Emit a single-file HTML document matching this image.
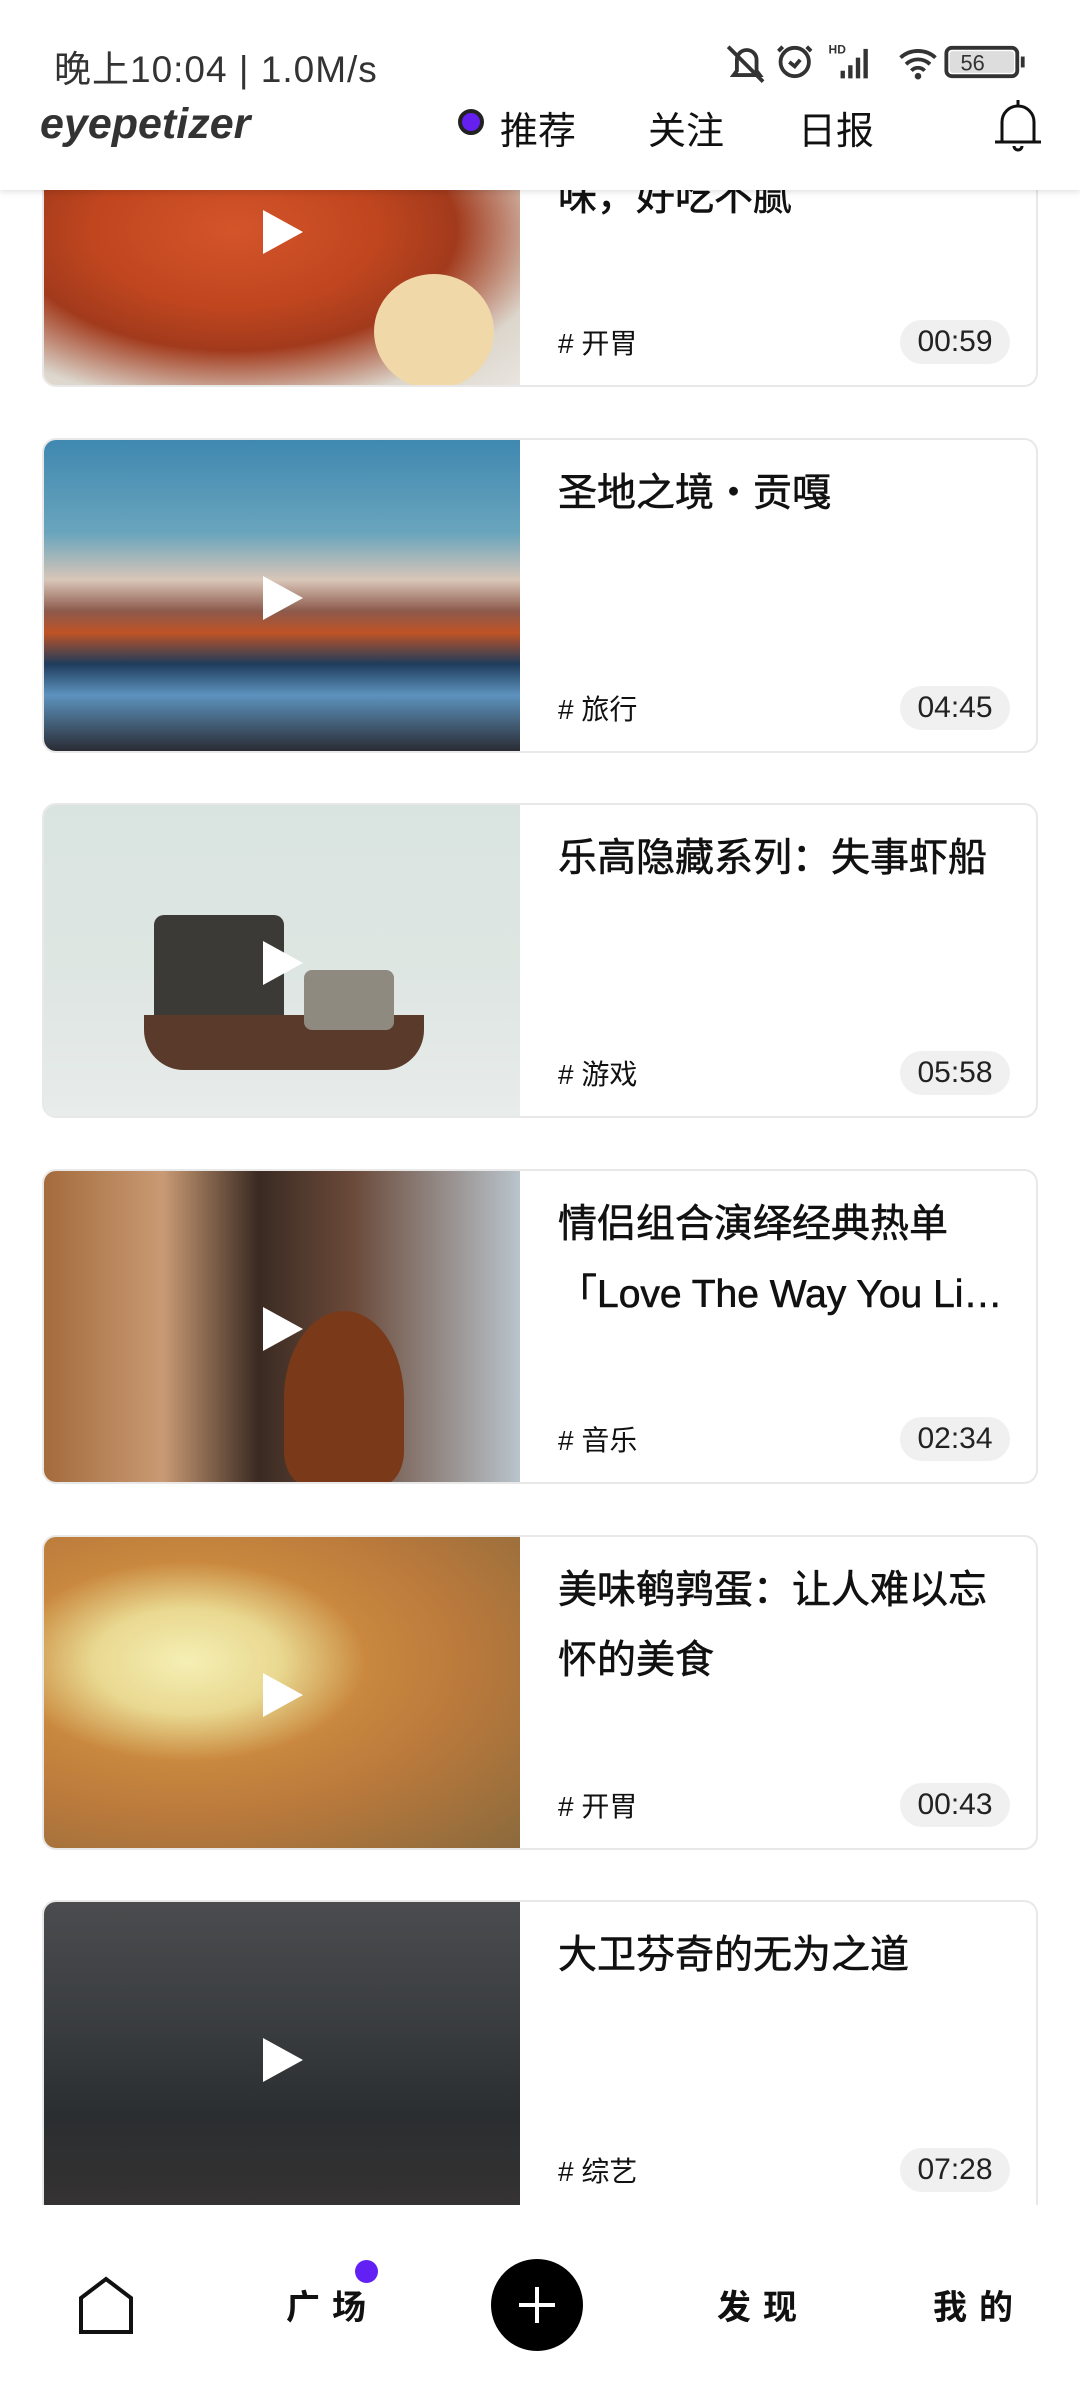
<!DOCTYPE html>
<html><head><meta charset="utf-8"><style>
*{margin:0;padding:0;box-sizing:border-box}
body{width:1080px;height:2400px;background:#fff;position:relative;overflow:hidden;font-family:"Liberation Sans","Noto Sans CJK SC",sans-serif;color:#111}
.card{position:absolute;left:42px;width:996px;height:315px;border:2px solid #e8e8e8;border-radius:14px;overflow:hidden;background:#fff}
.img{position:absolute;left:0;top:0;width:476px;height:100%}
.play{position:absolute;left:219px;top:136px;width:0;height:0;border-left:40px solid #fff;border-top:22px solid transparent;border-bottom:22px solid transparent}
.title{position:absolute;left:514px;top:19px;width:450px;font-size:39px;line-height:70px;color:#111;white-space:nowrap;font-weight:normal;-webkit-text-stroke:0.6px #111}
.tag{position:absolute;left:514px;top:248px;font-size:28px;color:#111}
.dur{position:absolute;right:26px;top:246px;width:110px;height:44px;border-radius:22px;background:#f0f0f0;font-size:30px;line-height:44px;text-align:center;color:#222}
.header{position:absolute;left:0;top:0;width:1080px;height:190px;background:#fff;box-shadow:0 2px 6px rgba(0,0,0,.12);z-index:5}
.nav{position:absolute;font-size:38px;top:100px;color:#111}
.bn{position:absolute;top:2280px;font-size:34px;font-weight:bold;letter-spacing:12px;color:#111}
</style></head><body>

<div class="card" style="top:72px"><div class="img" style="background:radial-gradient(ellipse at 40% 50%,#d4542a 0%,#c0461f 35%,#a23a1c 55%,#dcd6cc 80%,#e9e5df 100%)"><div style="position:absolute;left:330px;top:200px;width:120px;height:115px;background:#f0d8a8;border-radius:50%"></div><div class="play"></div></div>
<div class="title">味，好吃不腻<br>味，好吃不腻</div><div class="tag"># 开胃</div><div class="dur">00:59</div></div>

<div class="card" style="top:438px"><div class="img" style="background:linear-gradient(180deg,#3f88b0 0%,#6aa5bd 30%,#d9c6b8 45%,#8c5a4c 55%,#bf5326 62%,#1f3c5c 72%,#5d93be 82%,#2a2c34 100%)"><div class="play"></div></div>
<div class="title">圣地之境・贡嘎</div><div class="tag"># 旅行</div><div class="dur">04:45</div></div>

<div class="card" style="top:803px"><div class="img" style="background:linear-gradient(180deg,#d9e4e0 0%,#dfe6e3 60%,#e8eceb 100%)"><div style="position:absolute;left:110px;top:110px;width:130px;height:120px;background:#3b3a36;border-radius:10px"></div><div style="position:absolute;left:100px;top:210px;width:280px;height:55px;background:#5a3a2a;border-radius:0 0 40px 40px"></div><div style="position:absolute;left:260px;top:165px;width:90px;height:60px;background:#8f8a80;border-radius:8px"></div><div class="play"></div></div>
<div class="title">乐高隐藏系列：失事虾船</div><div class="tag"># 游戏</div><div class="dur">05:58</div></div>

<div class="card" style="top:1169px"><div class="img" style="background:linear-gradient(90deg,#a46b3c 0%,#c99a74 25%,#3a2a22 45%,#6b4a3a 65%,#b9c4cc 100%)"><div style="position:absolute;left:240px;top:140px;width:120px;height:175px;background:#7a3a1a;border-radius:50% 50% 20% 20%"></div><div class="play"></div></div>
<div class="title">情侣组合演绎经典热单<br>「Love The Way You Li…</div><div class="tag"># 音乐</div><div class="dur">02:34</div></div>

<div class="card" style="top:1535px"><div class="img" style="background:radial-gradient(ellipse at 30% 40%,#f5efb4 0%,#e9d890 20%,#c9883e 38%,#b9793c 60%,#8b6a3c 100%)"><div class="play"></div></div>
<div class="title">美味鹌鹑蛋：让人难以忘<br>怀的美食</div><div class="tag"># 开胃</div><div class="dur">00:43</div></div>

<div class="card" style="top:1900px;height:400px"><div class="img" style="height:305px;background:linear-gradient(180deg,#4a4c4e 0%,#3a3d40 40%,#2a2e30 70%,#353232 100%)"><div class="play"></div></div>
<div class="title">大卫芬奇的无为之道</div><div class="tag"># 综艺</div><div class="dur">07:28</div></div>

<div style="position:absolute;left:0;top:2205px;width:1080px;height:195px;background:#fff"></div>

<div class="header">
<div style="position:absolute;left:54px;top:39px;font-size:37px;letter-spacing:1px;color:#333">晚上10:04 | 1.0M/s</div>
<svg style="position:absolute;left:702px;top:38px" width="360" height="48" viewBox="0 0 330 44">
<g fill="none" stroke="#333" stroke-width="3.5"><path d="M32 30 V20 a9 9 0 0 1 18 0 V30 l3 4 H29z M24 8 L56 40"/><circle cx="85" cy="22" r="13"/><path d="M80 22 l5 4 5-6 M74 8 l-4 4 M96 8 l4 4"/><rect x="224" y="9" width="65" height="26" rx="5"/><path d="M294 17 v10"/><path d="M182 18 a24 24 0 0 1 32 0 M187 24 a16 16 0 0 1 22 0 M192 30 a8 8 0 0 1 12 0"/></g>
<g fill="#333"><rect x="127" y="30" width="4" height="7"/><rect x="134" y="25" width="4" height="12"/><rect x="141" y="18" width="4" height="19"/><rect x="148" y="10" width="4" height="27"/><text x="116" y="14" font-size="11" font-weight="bold" font-family="Liberation Sans">HD</text><circle cx="198" cy="35" r="3"/><rect x="227" y="12" width="59" height="20" rx="3" fill="#ddd"/><text x="237" y="30" font-size="20" font-family="Liberation Sans">56</text></g></svg>
<div style="position:absolute;left:40px;top:100px;font-size:43px;font-weight:bold;font-style:italic;color:#333;letter-spacing:0px">eyepetizer</div>
<div style="position:absolute;left:458px;top:109px;width:26px;height:26px;border-radius:50%;border:4px solid #222;background:#6520f0"></div>
<div class="nav" style="left:500px">推荐</div>
<div class="nav" style="left:648px">关注</div>
<div class="nav" style="left:798px">日报</div>
<svg style="position:absolute;left:990px;top:96px" width="56" height="60" viewBox="0 0 56 60"><path d="M28 4 v6 M12 46 V26 a16 16 0 0 1 32 0 V46 M5 46 H51 M24 50 a4 4 0 0 0 8 0" fill="none" stroke="#111" stroke-width="3"/></svg>
</div>

<svg style="position:absolute;left:78px;top:2276px" width="60" height="60" viewBox="0 0 60 60"><path d="M3 56 V22 L28 3 L53 22 V56 Z" fill="none" stroke="#111" stroke-width="4"/></svg>
<div class="bn" style="left:286px">广场</div>
<div style="position:absolute;left:355px;top:2260px;width:23px;height:23px;border-radius:50%;background:#6220f5"></div>
<div style="position:absolute;left:491px;top:2259px;width:92px;height:92px;border-radius:50%;background:#000"></div>
<div style="position:absolute;left:519px;top:2303px;width:36px;height:4px;background:#fff"></div>
<div style="position:absolute;left:535px;top:2287px;width:4px;height:36px;background:#fff"></div>
<div class="bn" style="left:717px">发现</div>
<div class="bn" style="left:933px">我的</div>
</body></html>
